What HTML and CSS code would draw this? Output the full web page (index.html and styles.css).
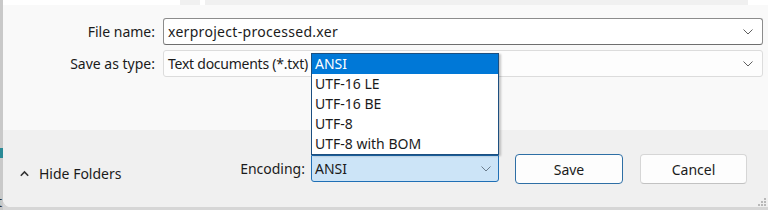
FILE: index.html
```html
<!DOCTYPE html>
<html>
<head>
<meta charset="utf-8">
<link rel="stylesheet" href="styles.css">
</head>
<body>
<div class="edge">
  <div class="edge-tab"></div>
  <div class="edge-t">t</div>
</div>
<div class="window">
  <div class="topstrip">
    <div class="ts ts-white ts-a"></div>
    <div class="ts ts-gray ts-b"></div>
    <div class="ts ts-white ts-c"></div>
    <div class="ts ts-gray ts-d"></div>
    <div class="ts ts-white ts-e"></div>
  </div>
  <div class="fields">
    <div class="label">File name:</div>
    <div class="box box-name">
      <span class="box-text text-wide">xerproject-processed.xer</span>
      <svg class="chev" width="10" height="6" viewBox="0 0 10 6"><path d="M0.5 0.5 L5 5 L9.5 0.5" fill="none" stroke="#5f5f5f" stroke-width="1"/></svg>
    </div>
    <div class="label">Save as type:</div>
    <div class="box box-type">
      <span class="box-text text-tight">Text documents (*.txt)</span>
      <svg class="chev" width="10" height="6" viewBox="0 0 10 6"><path d="M0.5 0.5 L5 5 L9.5 0.5" fill="none" stroke="#5f5f5f" stroke-width="1"/></svg>
    </div>
  </div>
  <div class="footer">
    <div class="hide">
      <svg class="up" width="9" height="7" viewBox="0 0 9 7"><path d="M0.8 5.8 L4.5 2 L8.2 5.8" fill="none" stroke="#333" stroke-width="1.6"/></svg>
      <span>Hide Folders</span>
    </div>
    <div class="enc">
      <span class="enc-label">Encoding:</span>
      <div class="combo">
        <span class="box-text">ANSI</span>
        <svg class="chev" width="10" height="6" viewBox="0 0 10 6"><path d="M0.5 0.5 L5 5 L9.5 0.5" fill="none" stroke="#6a7c8c" stroke-width="1"/></svg>
      </div>
    </div>
    <button class="btn btn-save">Save</button>
    <button class="btn btn-cancel">Cancel</button>
  </div>
  <ul class="list">
    <li class="sel">ANSI</li>
    <li>UTF-16 LE</li>
    <li>UTF-16 BE</li>
    <li>UTF-8</li>
    <li>UTF-8 with BOM</li>
  </ul>
  <svg class="grip" width="11" height="9" viewBox="0 0 11 9">
    <rect x="8" y="0" width="2" height="2" fill="#b9b9b9"/>
    <rect x="5" y="3" width="2" height="2" fill="#b9b9b9"/>
    <rect x="8" y="3" width="2" height="2" fill="#b9b9b9"/>
    <rect x="2" y="6" width="2" height="2" fill="#b9b9b9"/>
    <rect x="5" y="6" width="2" height="2" fill="#b9b9b9"/>
    <rect x="8" y="6" width="2" height="2" fill="#b9b9b9"/>
  </svg>
</div>
</body>
</html>
```
FILE: styles.css
```css
html, body {
  margin: 0;
  padding: 0;
}
body {
  width: 768px;
  height: 210px;
  background: #d6d6d6;
  display: flex;
  font-family: "Noto Sans", "Open Sans", sans-serif;
  font-size: 14px;
  color: #1b1b1b;
  overflow: hidden;
}
.edge {
  width: 3px;
  height: 210px;
  background: #c9c9c9;
  position: relative;
  flex: none;
  overflow: hidden;
}
.edge-tab {
  position: absolute;
  top: 148px;
  left: 0;
  width: 3px;
  height: 10px;
  background: #2a8a96;
}
.edge-t {
  position: absolute;
  top: 192px;
  left: -3px;
  font-size: 14px;
  color: #333;
}
.window {
  position: relative;
  width: 765px;
  height: 207px;
  background: #f9f9f9;
  border-bottom-left-radius: 8px;
  display: flex;
  flex-direction: column;
  overflow: hidden;
  flex: none;
}
.topstrip {
  display: flex;
  height: 5px;
  flex: none;
}
.ts-white { background: #ffffff; }
.ts-gray { background: #f0f0f0; }
.ts-a { width: 177px; }
.ts-b { width: 20px; }
.ts-c { width: 5px; }
.ts-d { flex: 1; }
.ts-e { width: 20px; }
.fields {
  display: grid;
  grid-template-columns: 152px 600px;
  column-gap: 8px;
  row-gap: 5px;
  padding-top: 13px;
  grid-auto-rows: 27px;
  align-content: start;
  height: 125px;
  box-sizing: border-box;
  flex: none;
}
.label {
  text-align: right;
  line-height: 27px;
  white-space: nowrap;
}
.box {
  box-sizing: border-box;
  height: 27px;
  display: flex;
  align-items: center;
  padding: 0 9px 0 4px;
  border-radius: 3px;
}
.box-name {
  background: #ffffff;
  border: 1px solid #8c8c8c;
  border-bottom-color: #6e6e6e;
}
.box-type {
  background: #fdfdfd;
  border: 1px solid #dcdcdc;
}
.box-text {
  flex: 1;
  white-space: nowrap;
}
.text-wide { letter-spacing: 0.3px; }
.text-tight { letter-spacing: -0.25px; }
.chev { flex: none; }
.footer {
  flex: 1;
  background: #f0f0f0;
  display: flex;
  align-items: flex-start;
  padding: 24px 21px 0 17px;
}
.hide {
  display: flex;
  align-items: center;
  gap: 10px;
  margin-top: 10px;
  color: #1b1b1b;
}
.up { flex: none; }
.enc {
  margin-left: auto;
  display: flex;
  align-items: center;
  gap: 6px;
  margin-top: 1px;
}
.combo {
  box-sizing: border-box;
  width: 188px;
  height: 27px;
  background: #cce4f7;
  border: 1px solid #1f6fb5;
  border-radius: 0 0 3px 3px;
  display: flex;
  align-items: center;
  padding: 0 7px 0 3px;
}
.btn {
  box-sizing: border-box;
  height: 30px;
  border-radius: 4px;
  background: #fdfdfd;
  font-family: inherit;
  font-size: 14px;
  color: #1b1b1b;
  padding: 0;
}
.btn-save {
  width: 108px;
  margin-left: 16px;
  border: 1px solid #2e6fa5;
}
.btn-cancel {
  width: 107px;
  margin-left: 17px;
  border: 1px solid #d6d6d6;
  border-bottom-color: #c2c2c2;
}
.list {
  position: absolute;
  left: 308px;
  top: 53px;
  width: 188px;
  height: 102px;
  box-sizing: border-box;
  margin: 0;
  padding: 0;
  list-style: none;
  background: #ffffff;
  border: 1px solid #1c4f80;
  box-shadow: 2px 1px 2px rgba(0, 0, 0, 0.22);
}
.list li {
  height: 20px;
  line-height: 20px;
  padding-left: 3px;
  white-space: nowrap;
}
.list li.sel {
  background: #0078d7;
  color: #ffffff;
}
.grip {
  position: absolute;
  right: 1px;
  bottom: 0px;
}
```
